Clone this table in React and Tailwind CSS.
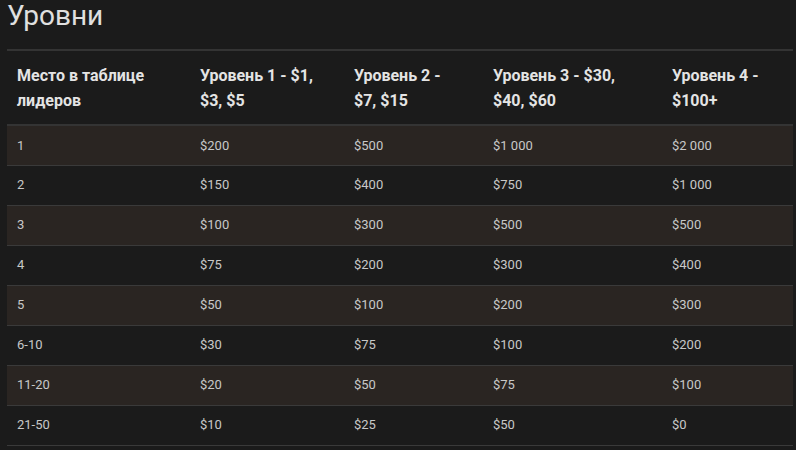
import React from "react";

const HEAD = [
  { t: "Место в таблице лидеров", w: "" },
  { t: "Уровень 1 - $1, $3, $5", w: "" },
  { t: "Уровень 2 - $7, $15", w: "max-w-[105px]" },
  { t: "Уровень 3 - $30, $40, $60", w: "max-w-[150px]" },
  { t: "Уровень 4 - $100+", w: "" },
];

const ROWS = [
  ["1", "$200", "$500", "$1 000", "$2 000"],
  ["2", "$150", "$400", "$750", "$1 000"],
  ["3", "$100", "$300", "$500", "$500"],
  ["4", "$75", "$200", "$300", "$400"],
  ["5", "$50", "$100", "$200", "$300"],
  ["6-10", "$30", "$75", "$100", "$200"],
  ["11-20", "$20", "$50", "$75", "$100"],
  ["21-50", "$10", "$25", "$50", "$0"],
];

const COLS = ["w-[183px]", "w-[154px]", "w-[139px]", "w-[179px]", "w-[131px]"];

export default function App() {
  return (
    <div className="w-[796px] h-[450px] overflow-hidden bg-[#1b1b1b] font-['Roboto',sans-serif]">
      <div className="px-[7px]">
        <h1 className="text-[28px] leading-[32px] pb-[17px] text-[#e0e0e0] font-normal">Уровни</h1>
        <table className="w-[786px] border-collapse table-fixed">
          <thead>
            <tr className="border-t-2 border-b-2 border-[#343434]">
              {HEAD.map((h, i) => (
                <th
                  key={i}
                  className={`${COLS[i]} text-left align-middle px-[10px] pt-[12px] pb-[11px] text-[16px] leading-[25px] font-bold text-[#e4e4e4]`}
                >
                  <div className={h.w}>{h.t}</div>
                </th>
              ))}
            </tr>
          </thead>
          <tbody>
            {ROWS.map((r, ri) => (
              <tr
                key={ri}
                className={`border-b border-[#3a3a3a] ${ri % 2 === 0 ? "bg-[#2a2522]" : "bg-[#1b1b1b]"}`}
              >
                {r.map((c, ci) => (
                  <td key={ci} className="px-[10px] h-[40px] text-[13px] text-[#c8c8c8] align-middle">
                    {c}
                  </td>
                ))}
              </tr>
            ))}
          </tbody>
        </table>
      </div>
    </div>
  );
}
